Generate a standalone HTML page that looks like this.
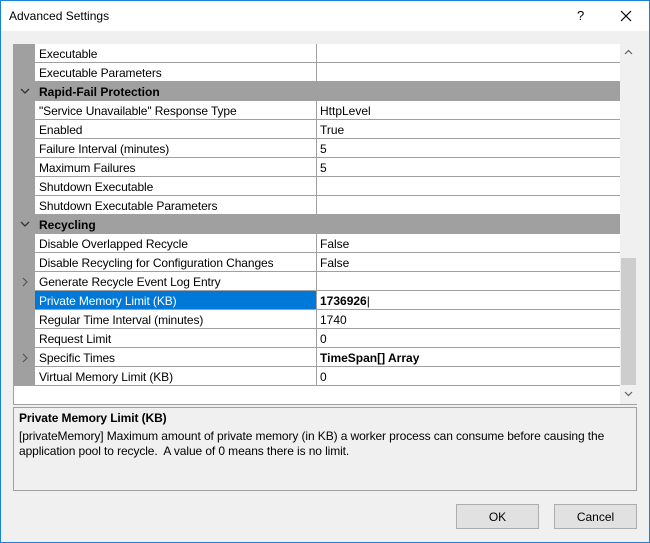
<!DOCTYPE html>
<html><head><style>
*{margin:0;padding:0;box-sizing:border-box}
body{width:650px;height:543px;background:#f0f0f0;font-family:"Liberation Sans",sans-serif;font-size:12px;color:#000;position:relative;overflow:hidden}
.win{position:absolute;left:0;top:0;width:650px;height:543px;border:1px solid #1883d7;background:#f0f0f0}
.title{position:absolute;left:0;top:0;width:648px;height:30px;background:#fff}
.title span{position:absolute;left:8px;top:8px;font-size:12px}
.grid{position:absolute;left:12px;top:43px;width:624px;height:361px;border:1px solid #a0a0a0;background:#fff;border-top:none}
.row{position:absolute;left:0;height:19px;width:606px}
.g{position:absolute;left:0;top:0;width:21px;height:19px;background:#a0a0a0}
.n{position:absolute;left:21px;top:0;width:281px;height:19px;border-bottom:1px solid #a0a0a0;padding:3px 0 0 4px;white-space:nowrap;letter-spacing:-0.1px}
.v{position:absolute;left:302px;top:0;width:304px;height:19px;border-bottom:1px solid #a0a0a0;border-left:1px solid #a0a0a0;padding:3px 0 0 3px}
.h{background:#a0a0a0;font-weight:bold}
.h .t{position:absolute;left:25px;top:3px}
.sel .n{background:#0078d7;color:#fff}
.sb{position:absolute;left:606px;top:0;width:17px;height:360px;background:#f0f0f0}
.thumb{position:absolute;left:1px;top:214px;width:15px;height:127px;background:#cdcdcd}
.desc{position:absolute;left:12px;top:406px;width:624px;height:84px;border:1px solid #a0a0a0;background:#f0f0f0;padding:3px 5px;line-height:15px;letter-spacing:-0.1px}
.btn{position:absolute;top:503px;width:83px;height:25px;background:#e1e1e1;border:1px solid #adadad;text-align:center;padding-top:5px}
.chev{position:absolute;left:6px;top:5px}
</style></head><body><div class="win">
<div class="title"><span>Advanced Settings</span>
<span style="left:576px;top:7px;font-size:13px">?</span>
<svg style="position:absolute;left:619px;top:9px" width="12" height="12"><path d="M1 1L11 11M11 1L1 11" stroke="#000" stroke-width="1.2"/></svg>
</div>
<div class="grid">
<div class="row" style="top:0"><div class="g"></div><div class="n">Executable</div><div class="v"></div></div>
<div class="row" style="top:19px"><div class="g"></div><div class="n">Executable Parameters</div><div class="v"></div></div>
<div class="row h" style="top:38px"><svg class="chev" width="10" height="8"><path d="M1 2L5 6L9 2" stroke="#333" fill="none" stroke-width="1.3"/></svg><span class="t">Rapid-Fail Protection</span></div>
<div class="row" style="top:57px"><div class="g"></div><div class="n">"Service Unavailable" Response Type</div><div class="v">HttpLevel</div></div>
<div class="row" style="top:76px"><div class="g"></div><div class="n">Enabled</div><div class="v">True</div></div>
<div class="row" style="top:95px"><div class="g"></div><div class="n">Failure Interval (minutes)</div><div class="v">5</div></div>
<div class="row" style="top:114px"><div class="g"></div><div class="n">Maximum Failures</div><div class="v">5</div></div>
<div class="row" style="top:133px"><div class="g"></div><div class="n">Shutdown Executable</div><div class="v"></div></div>
<div class="row" style="top:152px"><div class="g"></div><div class="n">Shutdown Executable Parameters</div><div class="v"></div></div>
<div class="row h" style="top:171px"><svg class="chev" width="10" height="8"><path d="M1 2L5 6L9 2" stroke="#333" fill="none" stroke-width="1.3"/></svg><span class="t">Recycling</span></div>
<div class="row" style="top:190px"><div class="g"></div><div class="n">Disable Overlapped Recycle</div><div class="v">False</div></div>
<div class="row" style="top:209px"><div class="g"></div><div class="n">Disable Recycling for Configuration Changes</div><div class="v">False</div></div>
<div class="row" style="top:228px"><div class="g"><svg class="chev" style="left:7px;top:5px" width="8" height="10"><path d="M2 1L6 5L2 9" stroke="#555" fill="none" stroke-width="1.2"/></svg></div><div class="n">Generate Recycle Event Log Entry</div><div class="v"></div></div>
<div class="row sel" style="top:247px"><div class="g"></div><div class="n">Private Memory Limit (KB)</div><div class="v" style="font-weight:bold">1736926<span style="font-weight:normal">|</span></div></div>
<div class="row" style="top:266px"><div class="g"></div><div class="n">Regular Time Interval (minutes)</div><div class="v">1740</div></div>
<div class="row" style="top:285px"><div class="g"></div><div class="n">Request Limit</div><div class="v">0</div></div>
<div class="row" style="top:304px"><div class="g"><svg class="chev" style="left:7px;top:5px" width="8" height="10"><path d="M2 1L6 5L2 9" stroke="#555" fill="none" stroke-width="1.2"/></svg></div><div class="n">Specific Times</div><div class="v" style="font-weight:bold">TimeSpan[] Array</div></div>
<div class="row" style="top:323px"><div class="g"></div><div class="n">Virtual Memory Limit (KB)</div><div class="v">0</div></div>
<div class="sb"><svg style="position:absolute;left:4px;top:5px" width="9" height="6"><path d="M1 5L4.5 1.5L8 5" stroke="#606060" fill="none" stroke-width="1.2"/></svg><div class="thumb"></div><svg style="position:absolute;left:4px;top:347px" width="9" height="6"><path d="M1 1L4.5 4.5L8 1" stroke="#606060" fill="none" stroke-width="1.2"/></svg></div>
</div>
<div class="desc"><b>Private Memory Limit (KB)</b><div style="margin-top:3px">[privateMemory] Maximum amount of private memory (in KB) a worker process can consume before causing the application pool to recycle.&nbsp; A value of 0 means there is no limit.</div></div>
<div class="btn" style="left:455px">OK</div>
<div class="btn" style="left:553px">Cancel</div>
</div></body></html>
